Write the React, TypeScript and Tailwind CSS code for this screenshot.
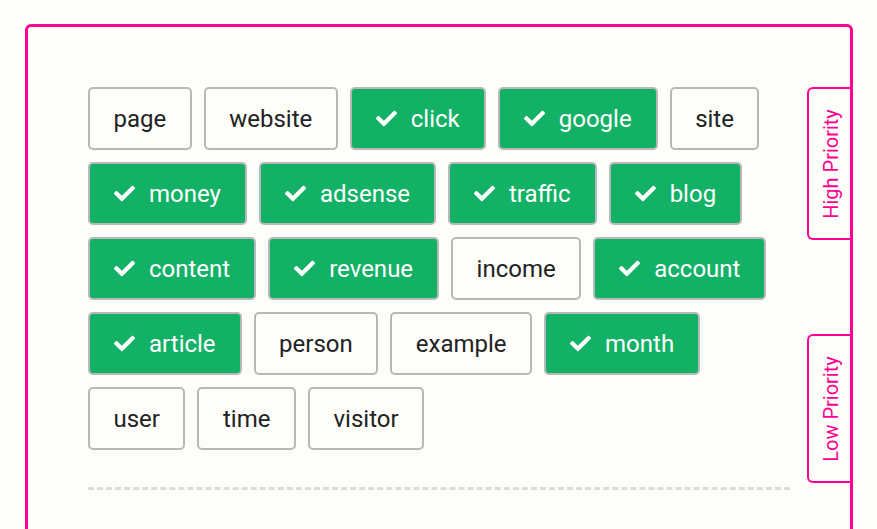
import React from "react";

const tags: { label: string; on: boolean }[] = [
  { label: "page", on: false },
  { label: "website", on: false },
  { label: "click", on: true },
  { label: "google", on: true },
  { label: "site", on: false },
  { label: "money", on: true },
  { label: "adsense", on: true },
  { label: "traffic", on: true },
  { label: "blog", on: true },
  { label: "content", on: true },
  { label: "revenue", on: true },
  { label: "income", on: false },
  { label: "account", on: true },
  { label: "article", on: true },
  { label: "person", on: false },
  { label: "example", on: false },
  { label: "month", on: true },
  { label: "user", on: false },
  { label: "time", on: false },
  { label: "visitor", on: false },
];

function Check() {
  return (
    <svg viewBox="0 0 512 512" className="w-[21px] h-[21px] fill-white mr-[14px]">
      <path d="M173.898 439.404l-166.4-166.4c-9.997-9.997-9.997-26.206 0-36.204l36.203-36.204c9.997-9.998 26.207-9.998 36.204 0L192 312.69 432.095 72.596c9.997-9.997 26.207-9.997 36.204 0l36.203 36.204c9.997 9.997 9.997 26.206 0 36.204l-294.4 294.401c-9.998 9.997-26.207 9.997-36.204-.001z" />
    </svg>
  );
}

function Tag({ label, on }: { label: string; on: boolean }) {
  return (
    <button
      className={
        on
          ? "flex items-center h-[63px] pl-[24px] pr-[24px] border-2 border-[#b8b8b8] rounded-[5px] bg-[#12b166] text-white text-[24px]"
          : "flex items-center h-[63px] px-[23.5px] border-2 border-[#b8b8b8] rounded-[5px] bg-transparent text-[#222] text-[24px]"
      }
    >
      {on && <Check />}
      <span>{label}</span>
    </button>
  );
}

function SideTab({ text, className }: { text: string; className: string }) {
  return (
    <div
      className={
        "absolute right-[-3px] w-[46px] flex items-center justify-center border-2 border-r-0 border-[#ff0090] rounded-l-[6px] " +
        className
      }
    >
      <span className="-rotate-90 whitespace-nowrap text-[20px] text-[#ff0090]">{text}</span>
    </div>
  );
}

export default function App() {
  return (
    <div className="min-h-[529px] h-[529px] overflow-hidden bg-[#fdfdfa] pt-[24px] pl-[25px] font-['Roboto',sans-serif]">
      <div className="relative w-[828px] h-[600px] border-[3px] border-[#ff0090] rounded-[6px] p-[60px]">
        <div className="flex flex-wrap gap-x-[12px] gap-y-[12px]">
          {tags.map((t) => (
            <Tag key={t.label} label={t.label} on={t.on} />
          ))}
        </div>
        <div className="mt-[37px] border-t-[3px] border-dashed border-[#dcdcdc]" />
        <SideTab text="High Priority" className="top-[60px] h-[153px]" />
        <SideTab text="Low Priority" className="top-[307px] h-[149px]" />
      </div>
    </div>
  );
}
